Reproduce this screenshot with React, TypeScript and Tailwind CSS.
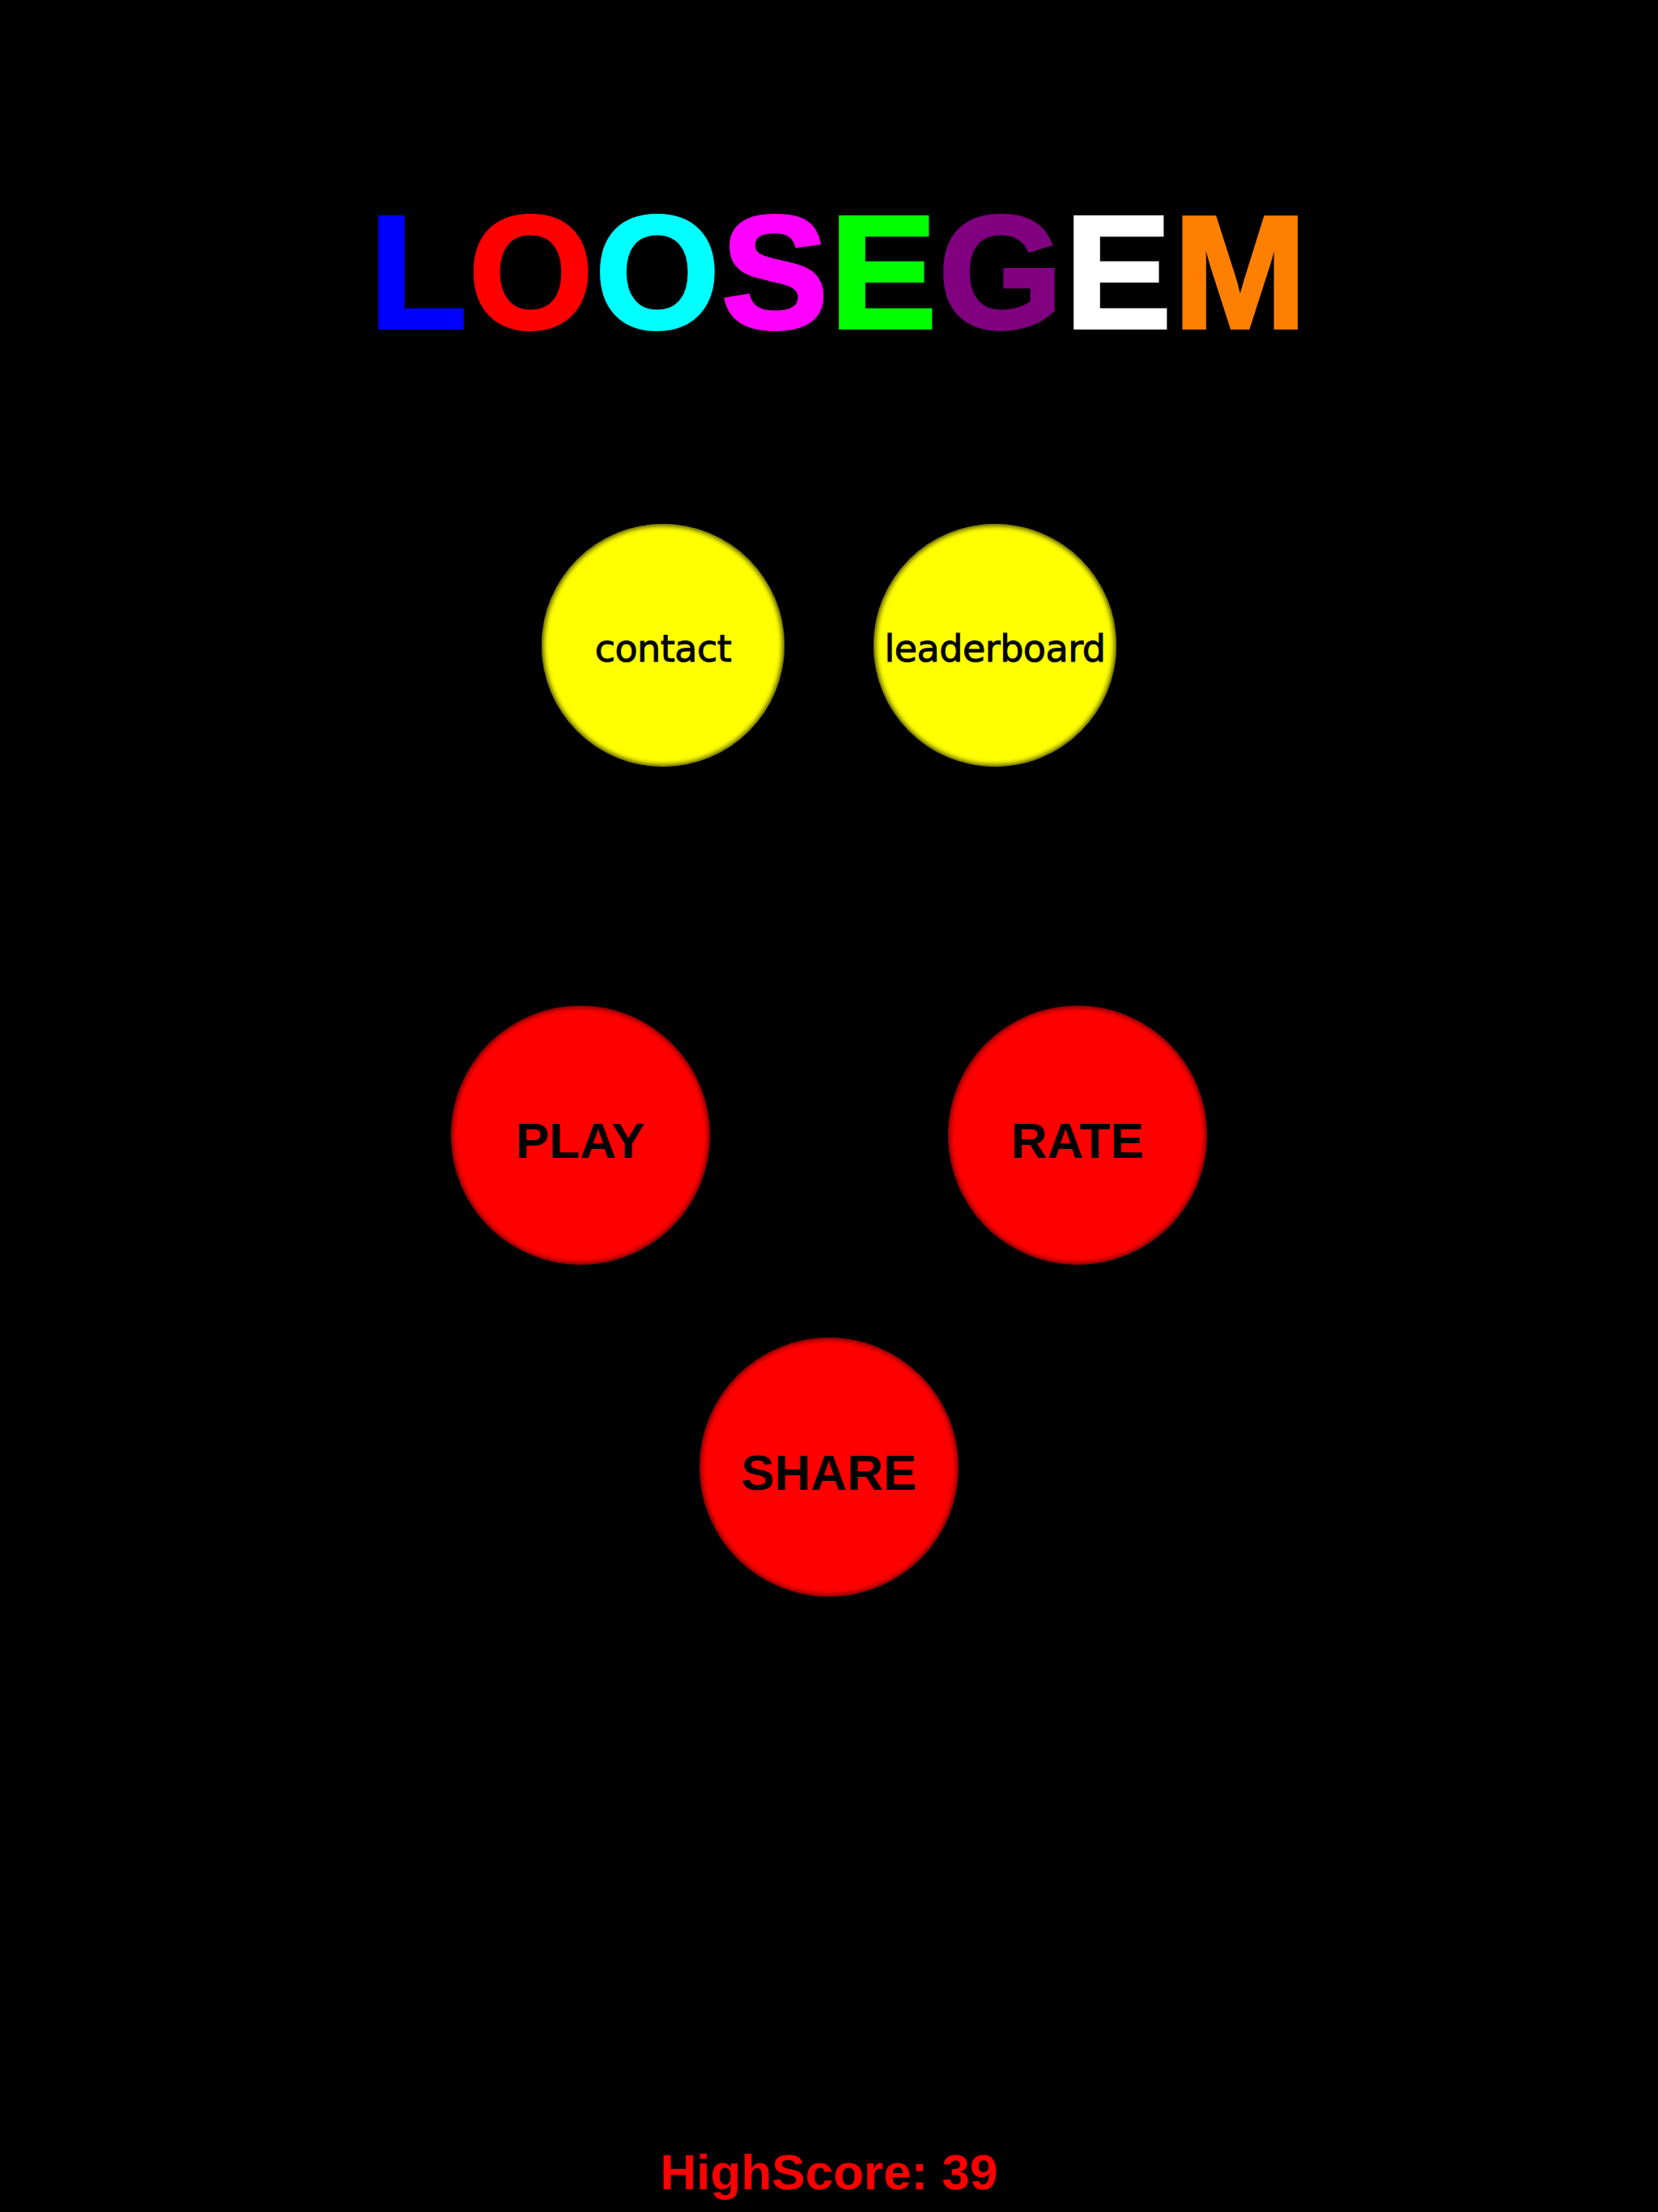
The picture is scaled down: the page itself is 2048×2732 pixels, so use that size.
const letters = [
  { ch: "L", color: "text-[#0000ff]" },
  { ch: "O", color: "text-[#ff0000]" },
  { ch: "O", color: "text-[#00ffff]" },
  { ch: "S", color: "text-[#ff00ff]" },
  { ch: "E", color: "text-[#00ff00]" },
  { ch: "G", color: "text-[#800080]" },
  { ch: "E", color: "text-[#ffffff]" },
  { ch: "M", color: "text-[#ff8000]" },
];

const SmallBall = ({ label }: { label: string }) => (
  <div className="w-[300px] h-[300px] rounded-full bg-[#ffff00] shadow-[inset_0_0_6px_2px_rgba(0,0,0,0.75)] flex items-center justify-center pt-[8px]">
    <span className="text-[46px] leading-none text-black tracking-[-0.5px] [-webkit-text-stroke:1px_#000] [font-family:'DejaVu_Sans',sans-serif]">
      {label}
    </span>
  </div>
);

const BigBall = ({ label }: { label: string }) => (
  <div className="w-[320px] h-[320px] rounded-full bg-[#ff0000] shadow-[inset_0_0_6px_2px_rgba(0,0,0,0.6)] flex items-center justify-center pt-[14px]">
    <span className="text-[62px] leading-none font-bold text-black [font-family:'Liberation_Sans',Arial,sans-serif]">
      {label}
    </span>
  </div>
);

const App = () => (
  <div className="w-[2048px] h-[2732px] bg-black flex flex-col items-center [font-family:'Liberation_Sans',Arial,sans-serif]">
    <h1 className="mt-[238px] h-[198px] pl-[24px] text-[198px] leading-none font-bold tracking-[2px] [-webkit-text-stroke:4px_currentColor]">
      {letters.map((l, i) => (
        <span key={i} className={l.color}>{l.ch}</span>
      ))}
    </h1>

    <div className="mt-[211px] flex gap-[110px]">
      <SmallBall label="contact" />
      <SmallBall label="leaderboard" />
    </div>

    <div className="mt-[295px] flex gap-[294px]">
      <BigBall label="PLAY" />
      <BigBall label="RATE" />
    </div>

    <div className="mt-[90px] flex">
      <BigBall label="SHARE" />
    </div>

    <div className="mt-auto mb-[3px] text-[62px] font-bold text-[#ff0000]">HighScore: 39</div>
  </div>
);

export default App;
